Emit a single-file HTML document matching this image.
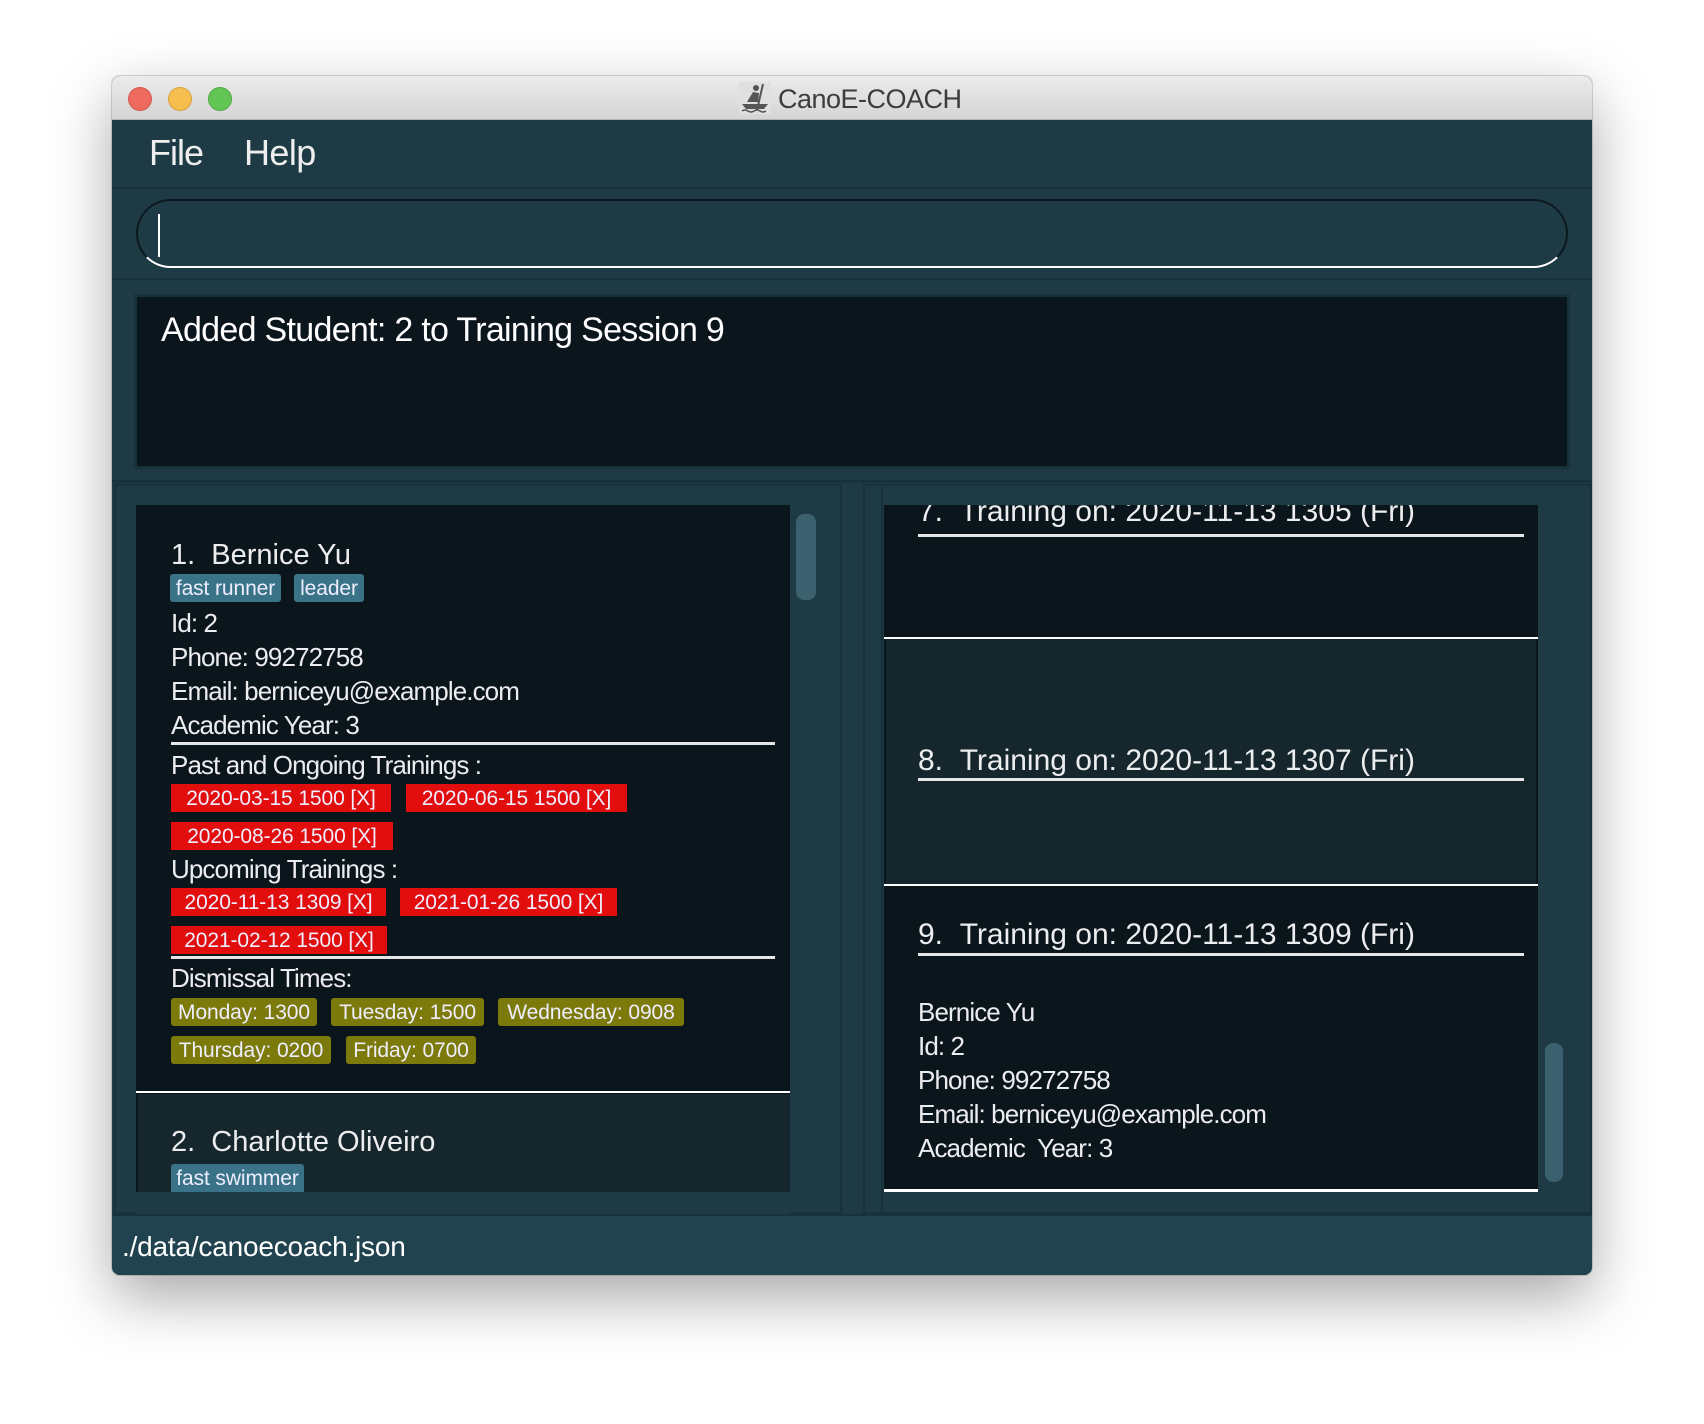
<!DOCTYPE html>
<html><head><meta charset="utf-8"><style>
*{margin:0;padding:0;box-sizing:border-box}
body{width:1704px;height:1424px;background:#fff;position:relative;overflow:hidden;font-family:"Liberation Sans",sans-serif;color:#ecedef}
.a{position:absolute;white-space:nowrap}
.win{position:absolute;left:112px;top:76px;width:1480px;height:1199px;background:#1d3a45;border-radius:8px;box-shadow:0 22px 60px rgba(0,0,0,.35),0 0 0 1px rgba(0,0,0,.15);overflow:hidden}
.tb{position:absolute;left:0;top:0;width:1480px;height:44px;background:linear-gradient(#ebebeb,#d5d5d5);border-bottom:1px solid #b5b5b5}
.dot{position:absolute;top:11px;width:24px;height:24px;border-radius:50%}
.t{font-size:26px;line-height:26px;letter-spacing:-0.9px}
.tag{position:absolute;height:28px;line-height:30px;font-size:21px;text-align:center;border-radius:3px;color:#eef;letter-spacing:-0.1px}
.b{background:#3a7387}.r{background:#e20d0d;border-radius:0}.o{background:#7c7a0a}
.ln{position:absolute;height:3px;background:#e6e6e6}
</style></head><body>
<div class="win">
 <div class="tb">
  <div class="dot" style="left:16px;background:#ee6a5e;border:1px solid #d4584d"></div>
  <div class="dot" style="left:56px;background:#f5be4f;border:1px solid #d9a23d"></div>
  <div class="dot" style="left:96px;background:#62c655;border:1px solid #51a847"></div>
  <svg class="a" style="left:627px;top:6px" width="32" height="32" viewBox="0 0 32 32"><rect width="32" height="32" fill="#e0e0e0"/><circle cx="17" cy="6" r="3" fill="#555"/><path d="M14 10l6 1-1 9H8z" fill="#555"/><path d="M24 2l-6 26" stroke="#555" stroke-width="2"/><path d="M3 22h26l-4 5H7z" fill="#555"/><path d="M3 29q3-2 6 0t6 0 6 0 6 0" stroke="#555" fill="none" stroke-width="1.5"/></svg>
  <div class="a" style="left:666px;top:8px;font-size:27px;line-height:30px;color:#3c3c3c;letter-spacing:-0.5px">CanoE-COACH</div>
 </div>
 <div class="a" style="left:37px;top:59px;font-size:36px;line-height:36px;color:#eee;letter-spacing:-1px">File</div>
 <div class="a" style="left:132px;top:59px;font-size:36px;line-height:36px;color:#eee;letter-spacing:-0.6px">Help</div>
 <div class="a" style="left:0;top:111px;width:1480px;height:2px;background:#17323d"></div>
 <div class="a" style="left:24px;top:123px;width:1432px;height:69px;border-radius:35px;border:2px solid #0c1a20;border-bottom:2px solid #fff;background:#1d3a45"></div>
 <div class="a" style="left:46px;top:138px;width:2px;height:43px;background:#fff"></div>
 <div class="a" style="left:0;top:202px;width:1480px;height:2px;background:#17323d"></div>
 <div class="a" style="left:22px;top:218px;width:1436px;height:175px;background:#0b151c;border:3px solid #17323d"></div>
 <div class="a" style="left:49px;top:237px;font-size:34px;line-height:34px;color:#fff;letter-spacing:-0.7px">Added Student: 2 to Training Session 9</div>
 <div class="a" style="left:0;top:404px;width:1480px;height:3px;background:#17323d"></div>
 <div class="a" style="left:2px;top:408px;width:728px;height:730px;border:2px solid #17323d"></div>
 <div class="a" style="left:751px;top:408px;width:20px;height:730px;background:#1d3a45;border-left:2px solid #17323d;border-right:2px solid #17323d"></div>
 <div class="a" style="left:24px;top:429px;width:654px;height:687px;background:#0b151c"></div>
 <div class="a" style="left:684px;top:438px;width:20px;height:86px;border-radius:8px;background:#3a616d"></div>
 <div class="a" style="left:59px;top:465px;font-size:29px;line-height:29px">1.&nbsp; Bernice Yu</div>
 <div class="tag b" style="left:58px;top:498px;width:111px">fast runner</div>
 <div class="tag b" style="left:182px;top:498px;width:70px">leader</div>
 <div class="a t" style="left:59px;top:534px">Id: 2</div>
 <div class="a t" style="left:59px;top:568px">Phone: 99272758</div>
 <div class="a t" style="left:59px;top:602px">Email: berniceyu@example.com</div>
 <div class="a t" style="left:59px;top:636px">Academic Year: 3</div>
 <div class="ln" style="left:59px;top:666px;width:604px"></div>
 <div class="a t" style="left:59px;top:676px">Past and Ongoing Trainings :</div>
 <div class="tag r" style="left:59px;top:708px;width:220px">2020-03-15 1500 [X]</div>
 <div class="tag r" style="left:294px;top:708px;width:221px">2020-06-15 1500 [X]</div>
 <div class="tag r" style="left:59px;top:746px;width:222px">2020-08-26 1500 [X]</div>
 <div class="a t" style="left:59px;top:780px">Upcoming Trainings :</div>
 <div class="tag r" style="left:59px;top:812px;width:215px">2020-11-13 1309 [X]</div>
 <div class="tag r" style="left:288px;top:812px;width:217px">2021-01-26 1500 [X]</div>
 <div class="tag r" style="left:59px;top:850px;width:216px">2021-02-12 1500 [X]</div>
 <div class="ln" style="left:59px;top:880px;width:604px"></div>
 <div class="a t" style="left:59px;top:889px">Dismissal Times:</div>
 <div class="tag o" style="left:59px;top:922px;width:146px">Monday: 1300</div>
 <div class="tag o" style="left:219px;top:922px;width:153px">Tuesday: 1500</div>
 <div class="tag o" style="left:386px;top:922px;width:186px">Wednesday: 0908</div>
 <div class="tag o" style="left:59px;top:960px;width:160px">Thursday: 0200</div>
 <div class="tag o" style="left:234px;top:960px;width:130px">Friday: 0700</div>
 <div class="a" style="left:24px;top:1015px;width:654px;height:2px;background:#fff"></div>
 <div class="a" style="left:26px;top:1018px;width:652px;height:98px;background:#15262d"></div>
 <div class="a" style="left:59px;top:1052px;font-size:29px;line-height:29px">2.&nbsp; Charlotte Oliveiro</div>
 <div class="tag b" style="left:59px;top:1088px;width:133px;border-radius:3px 3px 0 0">fast swimmer</div>
 <div class="a" style="left:24px;top:1116px;width:654px;height:22px;background:#1d3a45"></div>
 <div class="a" style="left:752px;top:408px;width:728px;height:730px;border:2px solid #17323d;border-left:none"></div>
 <div class="a" style="left:772px;top:429px;width:654px;height:687px;background:#0b151c;overflow:hidden">
  <div class="a" style="left:34px;top:-8px;font-size:30px;line-height:30px">7.&nbsp;&nbsp;Training on: 2020-11-13 1305 (Fri)</div>
  <div class="ln" style="left:34px;top:29px;width:606px"></div>
  <div class="a" style="left:0;top:132px;width:654px;height:2px;background:#fff"></div>
  <div class="a" style="left:2px;top:134px;width:650px;height:245px;background:#15262d"></div>
  <div class="a" style="left:34px;top:241px;font-size:30px;line-height:30px">8.&nbsp;&nbsp;Training on: 2020-11-13 1307 (Fri)</div>
  <div class="ln" style="left:34px;top:273px;width:606px"></div>
  <div class="a" style="left:0;top:379px;width:654px;height:2px;background:#fff"></div>
  <div class="a" style="left:34px;top:415px;font-size:30px;line-height:30px">9.&nbsp;&nbsp;Training on: 2020-11-13 1309 (Fri)</div>
  <div class="ln" style="left:34px;top:448px;width:606px"></div>
  <div class="a t" style="left:34px;top:494px">Bernice Yu</div>
  <div class="a t" style="left:34px;top:528px">Id: 2</div>
  <div class="a t" style="left:34px;top:562px">Phone: 99272758</div>
  <div class="a t" style="left:34px;top:596px">Email: berniceyu@example.com</div>
  <div class="a t" style="left:34px;top:630px">Academic&nbsp; Year: 3</div>
  <div class="a" style="left:0;top:684px;width:654px;height:3px;background:#fff"></div>
 </div>
 <div class="a" style="left:1433px;top:967px;width:18px;height:139px;border-radius:8px;background:#3a616d"></div>
 <div class="a" style="left:0;top:1138px;width:1480px;height:61px;background:#21434f;border-top:2px solid #17323d"></div>
 <div class="a" style="left:10px;top:1157px;font-size:28px;line-height:28px;color:#fff;letter-spacing:-0.2px">./data/canoecoach.json</div>
</div>
</body></html>
